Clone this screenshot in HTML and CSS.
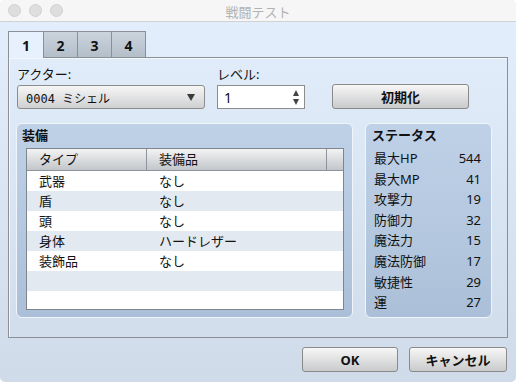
FILE: index.html
```html
<!DOCTYPE html>
<html lang="ja">
<head>
  <meta charset="UTF-8">
  <title>戦闘テスト</title>
  <link rel="stylesheet" href="styles.css">
</head>
<body>
  <div class="window">
    <div class="titlebar">
      <div class="lights">
        <span class="light"></span>
        <span class="light"></span>
        <span class="light"></span>
      </div>
      <div class="title">戦闘テスト</div>
    </div>

    <div class="body">
      <div class="tabs">
        <div class="tab active">1</div>
        <div class="tab">2</div>
        <div class="tab">3</div>
        <div class="tab">4</div>
      </div>

      <div class="panel">
        <div class="form-row">
          <div class="field actor">
            <label>アクター:</label>
            <div class="combo">
              <span class="combo-text">0004 ミシェル</span>
              <span class="combo-arrow"></span>
            </div>
          </div>
          <div class="field level">
            <label>レベル:</label>
            <div class="spin">
              <span>1</span>
              <span class="spin-arrows"><i class="up"></i><i class="down"></i></span>
            </div>
          </div>
          <button class="button reset">初期化</button>
        </div>

        <div class="groups">
          <div class="group equip">
            <div class="group-title">装備</div>
            <div class="table">
              <div class="thead">
                <div class="th c1">タイプ</div>
                <div class="th c2">装備品</div>
                <div class="th c3"></div>
              </div>
              <div class="tr"><div class="td c1">武器</div><div class="td">なし</div></div>
              <div class="tr alt"><div class="td c1">盾</div><div class="td">なし</div></div>
              <div class="tr"><div class="td c1">頭</div><div class="td">なし</div></div>
              <div class="tr alt"><div class="td c1">身体</div><div class="td">ハードレザー</div></div>
              <div class="tr"><div class="td c1">装飾品</div><div class="td">なし</div></div>
              <div class="tr alt"></div>
              <div class="tr"></div>
            </div>
          </div>

          <div class="group status">
            <div class="group-title">ステータス</div>
            <div class="stat"><span>最大HP</span><span>544</span></div>
            <div class="stat"><span>最大MP</span><span>41</span></div>
            <div class="stat"><span>攻撃力</span><span>19</span></div>
            <div class="stat"><span>防御力</span><span>32</span></div>
            <div class="stat"><span>魔法力</span><span>15</span></div>
            <div class="stat"><span>魔法防御</span><span>17</span></div>
            <div class="stat"><span>敏捷性</span><span>29</span></div>
            <div class="stat"><span>運</span><span>27</span></div>
          </div>
        </div>
      </div>

      <div class="actions">
        <button class="button ok">OK</button>
        <button class="button cancel">キャンセル</button>
      </div>
    </div>
  </div>
</body>
</html>
```

FILE: styles.css
```css
body {
  margin: 0;
  background-color: #ffffff;
  font-family: "Noto Sans", "Noto Sans CJK JP", sans-serif;
  font-size: 13px;
  color: #111111;
}

.window {
  width: 516px;
  height: 382px;
  display: flex;
  flex-direction: column;
  border-radius: 5px;
  overflow: hidden;
  background: linear-gradient(#e3effc, #cfdbe9);
}

.titlebar {
  height: 21px;
  flex-shrink: 0;
  background-color: #f6f6f6;
  border-bottom: 1px solid #d2d2d2;
  display: flex;
  align-items: center;
  position: relative;
}

.lights {
  display: flex;
  gap: 8px;
  padding-left: 8px;
}

.light {
  width: 11px;
  height: 11px;
  border-radius: 50%;
  background-color: #dedede;
  border: 1px solid #d0d0d0;
}

.title {
  position: absolute;
  left: 0;
  right: 0;
  top: 2px;
  text-align: center;
  color: #b2b2b2;
  font-size: 13px;
}

.body {
  flex: 1;
  padding: 9px 9px 0 8px;
}

.tabs {
  display: flex;
  height: 26px;
}

.tab {
  width: 34px;
  height: 26px;
  box-sizing: border-box;
  border: 1px solid #8b9096;
  border-bottom: none;
  border-left: none;
  background: linear-gradient(#cbd4dd, #b3bec9);
  text-align: center;
  font-weight: bold;
  font-size: 14px;
  line-height: 27px;
}

.tab.active {
  width: 36px;
  height: 27px;
  border-left: 1px solid #8b9096;
  background-color: #e6f1fd;
  background-image: none;
  position: relative;
  z-index: 1;
}

.panel {
  width: 500px;
  height: 281px;
  box-sizing: border-box;
  border: 1px solid #8b9096;
  box-shadow: inset 1px 1px 0 #f4f8fc;
  padding: 8px 0 0 8px;
}

.form-row {
  display: flex;
  align-items: flex-end;
}

.field label {
  display: block;
  height: 19px;
  line-height: 17px;
  font-size: 13px;
}

.actor {
  width: 188px;
}

.level {
  width: 88px;
  margin-left: 12px;
}

.combo {
  height: 24px;
  box-sizing: border-box;
  border: 1px solid #8d8d8d;
  border-radius: 3px;
  background: linear-gradient(#f6f6f6, #cfd0d2);
  display: flex;
  align-items: center;
  justify-content: space-between;
  padding: 0 9px 0 8px;
}

.combo-text {
  font-family: "DejaVu Sans Mono", "Noto Sans CJK JP", monospace;
  font-size: 12px;
}

.combo-arrow {
  width: 0;
  height: 0;
  border-left: 4px solid transparent;
  border-right: 4px solid transparent;
  border-top: 7px solid #3a3a3a;
}

.spin {
  height: 24px;
  box-sizing: border-box;
  border: 1px solid #8d8d8d;
  background-color: #ffffff;
  display: flex;
  align-items: center;
  justify-content: space-between;
  padding: 0 5px 0 6px;
  font-size: 14px;
}

.spin-arrows {
  display: flex;
  flex-direction: column;
  gap: 3px;
}

.spin-arrows i {
  width: 0;
  height: 0;
  border-left: 3px solid transparent;
  border-right: 3px solid transparent;
}

.spin-arrows .up {
  border-bottom: 6px solid #444444;
}

.spin-arrows .down {
  border-top: 6px solid #444444;
}

.button {
  font-family: "Noto Sans", "Noto Sans CJK JP", sans-serif;
  font-size: 13px;
  font-weight: bold;
  color: #111111;
  height: 25px;
  border: 1px solid #8a8a8a;
  border-radius: 3px;
  background: linear-gradient(#f7f7f7, #c9cacc);
  padding: 0;
  cursor: pointer;
}

.reset {
  width: 137px;
  margin-left: 27px;
}

.groups {
  display: flex;
  gap: 12px;
  margin-top: 14px;
  margin-left: -1px;
}

.group {
  height: 195px;
  box-sizing: border-box;
  border: 1px solid #f0f5fb;
  border-radius: 6px;
  background: linear-gradient(#bfd1e7, #abc0d8);
}

.group-title {
  font-weight: bold;
  font-size: 13px;
  height: 24px;
  line-height: 22px;
}

.equip {
  width: 337px;
  padding: 0 8px 0 5px;
}

.table {
  width: 318px;
  height: 162px;
  margin-left: 4px;
  box-sizing: border-box;
  border: 1px solid #7d858e;
  background-color: #ffffff;
}

.thead {
  display: flex;
  height: 21px;
  border-bottom: 1px solid #8e949b;
  background: linear-gradient(#f3f3f3, #c2c6ca);
}

.th {
  box-sizing: border-box;
  padding-left: 12px;
  line-height: 20px;
  font-size: 13px;
  border-right: 1px solid #8e949b;
}

.th.c1 {
  width: 120px;
}

.th.c2 {
  width: 180px;
}

.th.c3 {
  flex: 1;
  border-right: none;
}

.tr {
  display: flex;
  height: 20px;
  line-height: 20px;
}

.tr.alt {
  background-color: #e3e9f0;
}

.td {
  padding-left: 12px;
}

.td.c1 {
  width: 108px;
}

.status {
  width: 127px;
  padding: 0 10px 0 6px;
}

.stat {
  display: flex;
  justify-content: space-between;
  height: 20.6px;
  line-height: 20px;
  padding-left: 2px;
  font-size: 13px;
}

.actions {
  display: flex;
  justify-content: flex-end;
  gap: 11px;
  margin-top: 9px;
}

.ok {
  width: 96px;
}

.cancel {
  width: 98px;
}
```
